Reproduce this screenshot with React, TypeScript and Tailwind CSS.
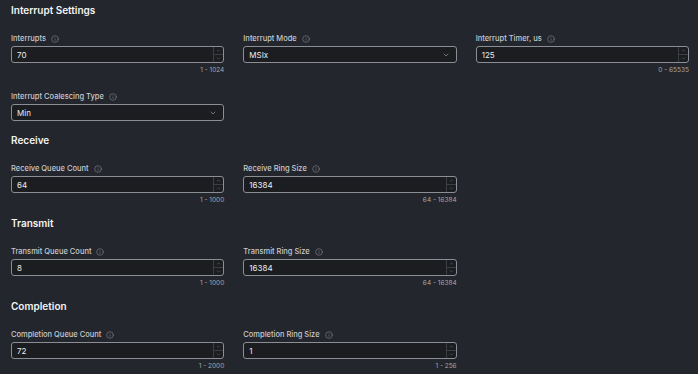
import React from "react";
import { Info, ChevronDown, ChevronUp } from "lucide-react";

type Field = {
  label: string;
  value: string;
  kind: "number" | "select";
  range?: string;
};

type Section = {
  title: string;
  rows: Field[][];
};

const sections: Section[] = [
  {
    title: "Interrupt Settings",
    rows: [
      [
        { label: "Interrupts", value: "70", kind: "number", range: "1 - 1024" },
        { label: "Interrupt Mode", value: "MSIx", kind: "select" },
        { label: "Interrupt Timer, us", value: "125", kind: "number", range: "0 - 65535" },
      ],
      [{ label: "Interrupt Coalescing Type", value: "Min", kind: "select" }],
    ],
  },
  {
    title: "Receive",
    rows: [
      [
        { label: "Receive Queue Count", value: "64", kind: "number", range: "1 - 1000" },
        { label: "Receive Ring Size", value: "16384", kind: "number", range: "64 - 16384" },
      ],
    ],
  },
  {
    title: "Transmit",
    rows: [
      [
        { label: "Transmit Queue Count", value: "8", kind: "number", range: "1 - 1000" },
        { label: "Transmit Ring Size", value: "16384", kind: "number", range: "64 - 16384" },
      ],
    ],
  },
  {
    title: "Completion",
    rows: [
      [
        { label: "Completion Queue Count", value: "72", kind: "number", range: "1 - 2000" },
        { label: "Completion Ring Size", value: "1", kind: "number", range: "1 - 256" },
      ],
    ],
  },
];

function FieldBox({ field }: { field: Field }) {
  return (
    <div className="flex flex-col">
      <div className="flex h-[12px] items-center gap-[5px] text-[7.5px] font-medium leading-[12px] text-[#c8cace]">
        <span>{field.label}</span>
        <Info className="h-[8px] w-[8px] text-[#8d9096]" strokeWidth={1.6} />
      </div>
      <div className="mt-[1px] flex h-[17px] items-center rounded-[3px] border border-[#8b8e94] bg-[#1b1d21]">
        <span className="flex-1 pl-[5px] text-[8px] leading-none text-[#ececec]">{field.value}</span>
        {field.kind === "select" ? (
          <ChevronDown className="mr-[6px] h-[8px] w-[8px] text-[#9a9da3]" strokeWidth={2} />
        ) : (
          <div className="flex h-full w-[10px] flex-col border-l border-[#3b3e44]">
            <div className="flex flex-1 items-center justify-center">
              <ChevronUp className="h-[5px] w-[5px] text-[#6f7278]" strokeWidth={2.5} />
            </div>
            <div className="flex flex-1 items-center justify-center border-t border-[#3b3e44]">
              <ChevronDown className="h-[5px] w-[5px] text-[#6f7278]" strokeWidth={2.5} />
            </div>
          </div>
        )}
      </div>
      {field.range && (
        <div className="mt-[2px] h-[10px] text-right text-[6.5px] leading-[10px] text-[#a3a6ab]">
          {field.range}
        </div>
      )}
    </div>
  );
}

export default function App() {
  return (
    <div
      className="h-[374px] w-[698px] overflow-hidden bg-[#23262c] pl-[11px] pr-[9px] pt-[2px]"
      style={{ fontFamily: "Inter, 'Noto Sans', sans-serif" }}
    >
      <div className="flex flex-col gap-[10px]">
        {sections.map((section, i) => (
          <div key={section.title} className={i === 0 ? "mb-[1px]" : ""}>
            <h2 className="h-[16px] text-[10px] font-semibold leading-[16px] text-[#f3f3f3]">
              {section.title}
            </h2>
            <div className="mt-[15px] flex flex-col gap-[16px]">
              {section.rows.map((row, r) => (
                <div key={r} className="grid grid-cols-3 gap-x-[19px]">
                  {row.map((f) => (
                    <FieldBox key={f.label} field={f} />
                  ))}
                </div>
              ))}
            </div>
          </div>
        ))}
      </div>
    </div>
  );
}
